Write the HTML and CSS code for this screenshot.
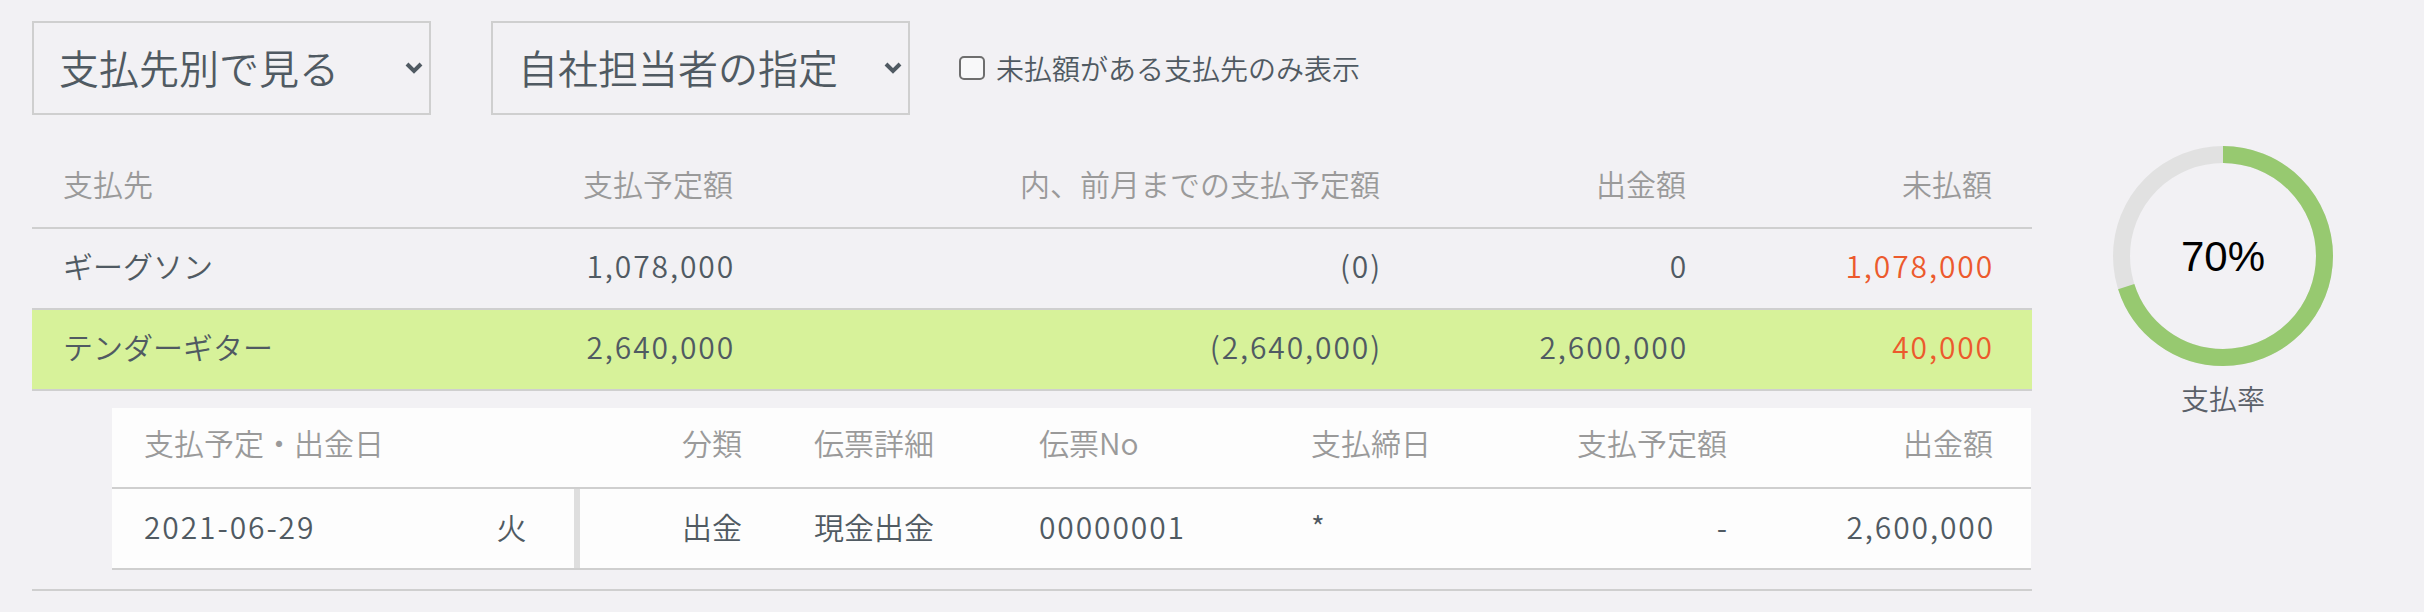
FILE: index.html
```html
<!DOCTYPE html>
<html lang="ja">
<head>
<meta charset="utf-8">
<title>支払先別</title>
<link rel="stylesheet" href="styles.css">
</head>
<body>
<div class="page">
  <div class="toolbar">
    <div class="select-wrap select-wide-1">
      <select class="select"><option>支払先別で見る</option></select>
      <svg class="chevron" width="18" height="12" viewBox="0 0 18 12"><path d="M2 2 L9 9 L16 2" fill="none" stroke="#505a62" stroke-width="4"/></svg>
    </div>
    <div class="select-wrap select-wide-2">
      <select class="select"><option>自社担当者の指定</option></select>
      <svg class="chevron" width="18" height="12" viewBox="0 0 18 12"><path d="M2 2 L9 9 L16 2" fill="none" stroke="#505a62" stroke-width="4"/></svg>
    </div>
    <label class="check">
      <input type="checkbox" class="cb">
      <span>未払額がある支払先のみ表示</span>
    </label>
  </div>

  <div class="content">
    <div class="table">
      <div class="row head">
        <div class="c left">支払先</div>
        <div class="c num">支払予定額</div>
        <div class="c num">内、前月までの支払予定額</div>
        <div class="c num">出金額</div>
        <div class="c num">未払額</div>
      </div>
      <div class="row">
        <div class="c left">ギーグソン</div>
        <div class="c num digits">1,078,000</div>
        <div class="c num digits">(0)</div>
        <div class="c num digits">0</div>
        <div class="c num digits red">1,078,000</div>
      </div>
      <div class="row active">
        <div class="c left">テンダーギター</div>
        <div class="c num digits">2,640,000</div>
        <div class="c num digits">(2,640,000)</div>
        <div class="c num digits">2,600,000</div>
        <div class="c num digits red">40,000</div>
      </div>
      <div class="detail">
        <div class="sub">
          <div class="srow shead">
            <div class="s s-date2">支払予定・出金日</div>
            <div class="s s-kind">分類</div>
            <div class="s s-memo">伝票詳細</div>
            <div class="s s-no">伝票No</div>
            <div class="s s-close">支払締日</div>
            <div class="s s-plan">支払予定額</div>
            <div class="s s-out">出金額</div>
          </div>
          <div class="srow sbody">
            <div class="s s-date digits">2021-06-29</div>
            <div class="s s-wd">火</div>
            <div class="s s-kind">出金</div>
            <div class="s s-memo">現金出金</div>
            <div class="s s-no digits">00000001</div>
            <div class="s s-close">*</div>
            <div class="s s-plan">-</div>
            <div class="s s-out digits">2,600,000</div>
          </div>
        </div>
      </div>
    </div>

    <div class="rate">
      <svg class="donut" width="220" height="220" viewBox="0 0 220 220">
        <circle cx="110" cy="110" r="101.5" fill="none" stroke="#e1e1e1" stroke-width="17"/>
        <circle cx="110" cy="110" r="101.5" fill="none" stroke="#97c970" stroke-width="17" stroke-dasharray="446.4 637.7" transform="rotate(-90 110 110)"/>
        <text x="110" y="125" text-anchor="middle" class="pct">70%</text>
      </svg>
      <div class="rate-label">支払率</div>
    </div>
  </div>
</div>
</body>
</html>
```

FILE: styles.css
```css
* { box-sizing: border-box; }
html, body { margin: 0; padding: 0; }
body {
  background: #f2f1f4;
  font-family: "Noto Sans CJK JP", "Noto Sans", sans-serif;
  font-weight: 350;
  color: #505a62;
  width: 2424px;
  height: 612px;
  overflow: hidden;
}
.page { padding: 21px 0 0 32px; }

.toolbar {
  display: flex;
  align-items: center;
  height: 94px;
}
.select-wrap { position: relative; height: 94px; }
.select-wide-1 { width: 399px; }
.select-wide-2 { width: 419px; margin-left: 60px; }
.select {
  appearance: none;
  -webkit-appearance: none;
  width: 100%;
  height: 100%;
  border: 2px solid #cfcfcf;
  border-radius: 0;
  background: transparent;
  font-family: "Noto Sans CJK JP", sans-serif;
  font-weight: 350;
  font-size: 40px;
  color: #505a62;
  padding: 0 0 2px 25px;
  margin: 0;
  outline: none;
}
.chevron { position: absolute; right: 8px; top: 41px; }

.check {
  display: flex;
  align-items: center;
  margin-left: 49px;
  font-size: 28px;
  color: #505a62;
}
.cb {
  appearance: none;
  -webkit-appearance: none;
  width: 26px;
  height: 24px;
  margin: 0 11px 0 0;
  border: 2px solid #6e6e6e;
  border-radius: 5px;
  background: #f8f8f9;
}

.content {
  display: flex;
  align-items: flex-start;
  margin-top: 33px;
}
.table { width: 2000px; }
.row {
  display: grid;
  grid-template-columns: 435px 306px 647px 306px 306px;
  height: 81px;
  padding-bottom: 8px;
  border-bottom: 2px solid #cfcfcf;
  align-items: center;
  font-size: 30px;
}
.row.head { color: #9a9a9a; padding-bottom: 10px; }
.row.active { background: #d7f29a; }
.c { white-space: nowrap; }
.c.left { padding-left: 31px; }
.c.num { text-align: right; padding-right: 40px; }
.c.num.digits { padding-right: 38px; }
.digits { letter-spacing: 1.9px; }
.red { color: #ec5a2d; }

.detail {
  padding: 17px 0 19px 80px;
  border-bottom: 2px solid #cfcfcf;
}
.sub { background: #fdfdfd; width: 1919px; }
.srow {
  display: grid;
  grid-template-columns: 337px 131px 202px 225px 272px 221px 265px 266px;
  height: 81px;
  border-bottom: 2px solid #cfcfcf;
  align-items: stretch;
  font-size: 30px;
}
.shead { color: #9a9a9a; }
.shead .s { padding-bottom: 12px; }
.sbody .s { padding-bottom: 5px; }
.s { display: flex; align-items: center; white-space: nowrap; }
.s-date2 { grid-column: span 2; padding-left: 32px; }
.s-date { padding-left: 32px; }
.s-wd { justify-content: center; border-right: 6px solid #dedede; }
.s-kind { justify-content: flex-end; padding-right: 40px; }
.s-memo, .s-no, .s-close { padding-left: 32px; }
.s-plan { justify-content: flex-end; padding-right: 38px; }
.s-out { justify-content: flex-end; padding-right: 38px; }
.s-out.digits { padding-right: 36px; }

.rate {
  margin-left: 81px;
  width: 220px;
  margin-top: -2px;
  display: flex;
  flex-direction: column;
  align-items: center;
}
.donut { display: block; }
.pct { font-family: "Liberation Sans", Arial, sans-serif; font-size: 42px; fill: #000; }
.rate-label { font-size: 28px; color: #5a6068; margin-top: 12px; }
```
